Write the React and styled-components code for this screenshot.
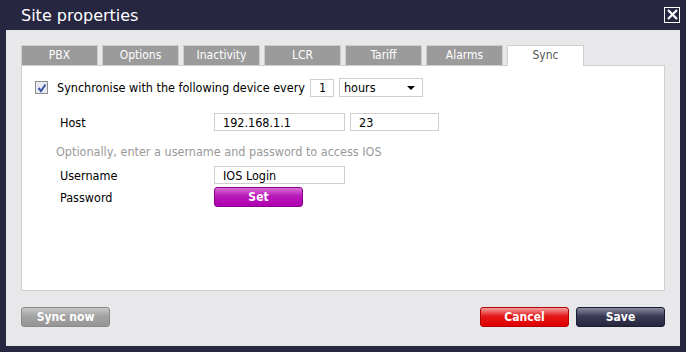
import styled, { createGlobalStyle } from "styled-components";

const Global = createGlobalStyle`
  html, body {
    margin: 0;
    padding: 0;
    background: #262641;
  }
  body {
    font-family: "DejaVu Sans Condensed", "DejaVu Sans", sans-serif;
  }
`;

const tabs = ["PBX", "Options", "Inactivity", "LCR", "Tariff", "Alarms", "Sync"];

export default function App() {
  return (
    <>
      <Global />
      <Window>
        <TitleBar>
          <Title>Site properties</Title>
          <Close>
            <svg width="11" height="11" viewBox="0 0 11 11">
              <path d="M1 1 L10 10 M10 1 L1 10" stroke="#fff" strokeWidth="2.2" />
            </svg>
          </Close>
        </TitleBar>
        <Body>
          <TabRow>
            {tabs.map((t) => (
              <Tab key={t} active={t === "Sync"}>
                {t}
              </Tab>
            ))}
          </TabRow>
          <Panel>
            <SyncRow>
              <Check>
                <svg width="10" height="10" viewBox="0 0 10 10">
                  <path d="M1.5 5 L4 8 L8.5 1.5" stroke="#3b54a8" strokeWidth="2" fill="none" />
                </svg>
              </Check>
              <span>Synchronise with the following device every</span>
              <Input width={24} defaultValue="1" />
              <Select>
                <span>hours</span>
                <svg width="8" height="4" viewBox="0 0 8 4">
                  <path d="M0 0 L8 0 L4 4 Z" fill="#000" />
                </svg>
              </Select>
            </SyncRow>
            <FieldRow top={16}>
              <Label>Host</Label>
              <Input width={131} defaultValue="192.168.1.1" />
              <Input width={89} defaultValue="23" />
            </FieldRow>
            <Hint>Optionally, enter a username and password to access IOS</Hint>
            <FieldRow top={7}>
              <Label>Username</Label>
              <Input width={131} defaultValue="IOS Login" />
            </FieldRow>
            <FieldRow top={4}>
              <Label>Password</Label>
              <Button tone="magenta" w={89}>Set</Button>
            </FieldRow>
          </Panel>
          <Footer>
            <Button tone="gray" w={89}>Sync now</Button>
            <Actions>
              <Button tone="red" w={89}>Cancel</Button>
              <Button tone="navy" w={89}>Save</Button>
            </Actions>
          </Footer>
        </Body>
      </Window>
    </>
  );
}

const tones = {
  gray: ["#c9c9c9", "#a3a3a3", "#959595", "#8a8a8a"],
  red: ["#f4a0a0", "#e41818", "#e00000", "#b00000"],
  navy: ["#8a8aa0", "#3a3a55", "#26263f", "#1a1a30"],
  magenta: ["#d870d8", "#b818b8", "#b000b0", "#8a008a"],
};

const Window = styled.div`
  width: 686px;
  height: 352px;
  box-sizing: border-box;
  padding: 0 6px 6px 6px;
  display: flex;
  flex-direction: column;
`;

const TitleBar = styled.div`
  height: 30px;
  display: flex;
  align-items: center;
  justify-content: space-between;
  padding-left: 15px;
`;

const Title = styled.div`
  color: #fff;
  font-family: "DejaVu Sans", sans-serif;
  font-size: 16px;
  margin-top: 1px;
`;

const Close = styled.div`
  width: 14px;
  height: 14px;
  border: 1px solid #fff;
  display: flex;
  align-items: center;
  justify-content: center;
  margin-top: -1px;
`;

const Body = styled.div`
  flex: 1;
  background: #e8e8ea;
  padding: 15px 15px 0 15px;
  display: flex;
  flex-direction: column;
`;

const TabRow = styled.div`
  display: flex;
  gap: 4px;
  height: 20px;
`;

const Tab = styled.div`
  width: 77px;
  box-sizing: border-box;
  height: ${(p) => (p.active ? "21px" : "20px")};
  border: 1px solid ${(p) => (p.active ? "#cfcfcf" : "#cdcdcd")};
  border-bottom: none;
  background: ${(p) => (p.active ? "#fff" : "#9b9b9b")};
  color: ${(p) => (p.active ? "#555" : "#fff")};
  font-size: 12px;
  text-align: center;
  line-height: 19px;
  position: relative;
  z-index: 1;
`;

const Panel = styled.div`
  height: 226px;
  box-sizing: border-box;
  background: #fff;
  border: 1px solid #cfcfcf;
  padding: 12px 0 0 13px;
  color: #000;
  font-size: 12.5px;
`;

const SyncRow = styled.div`
  display: flex;
  align-items: center;
  gap: 5px;
  height: 19px;
  & > span {
    margin-left: 2px;
  }
`;

const Check = styled.div`
  width: 11px;
  height: 11px;
  border: 1px solid #8d8d8d;
  background: #e9ebf3;
  display: flex;
  align-items: center;
  justify-content: center;
  margin-right: 2px;
`;

const Input = styled.input`
  width: ${(p) => p.width}px;
  height: 18px;
  box-sizing: border-box;
  border: 1px solid #cfcfcf;
  padding: 0 8px;
  font-family: inherit;
  font-size: 12.5px;
  color: #000;
  outline: none;
`;

const Select = styled.div`
  width: 84px;
  height: 19px;
  box-sizing: border-box;
  border: 1px solid #cfcfcf;
  display: flex;
  align-items: center;
  justify-content: space-between;
  padding: 0 7px 0 4px;
`;

const FieldRow = styled.div`
  display: flex;
  align-items: center;
  gap: 5px;
  margin-top: ${(p) => p.top}px;
  height: 18px;
`;

const Label = styled.div`
  width: 174px;
  padding-left: 25px;
  box-sizing: border-box;
`;

const Hint = styled.div`
  color: #999;
  margin: 13px 0 0 21px;
  height: 15px;
`;

const Button = styled.div`
  width: ${(p) => p.w}px;
  height: 20px;
  box-sizing: border-box;
  border-radius: 3px;
  border: 1px solid ${(p) => tones[p.tone][3]};
  background: linear-gradient(
    to bottom,
    ${(p) => tones[p.tone][0]} 0%,
    ${(p) => tones[p.tone][1]} 45%,
    ${(p) => tones[p.tone][2]} 100%
  );
  color: #fff;
  font-family: "DejaVu Sans Condensed", "DejaVu Sans", sans-serif;
  font-weight: bold;
  font-size: 12px;
  display: flex;
  align-items: center;
  justify-content: center;
`;

const Footer = styled.div`
  display: flex;
  justify-content: space-between;
  margin-top: 16px;
`;

const Actions = styled.div`
  display: flex;
  gap: 7px;
`;
